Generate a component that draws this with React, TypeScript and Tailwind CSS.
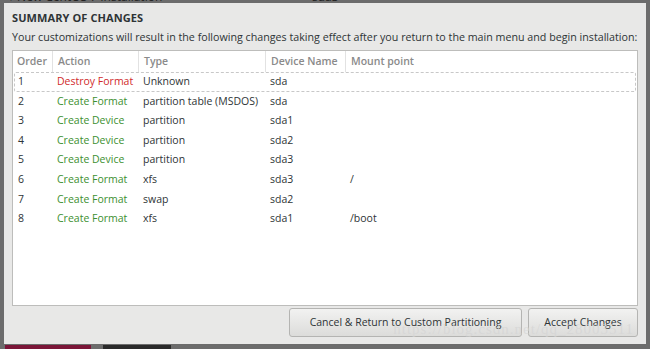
import React from "react";

type Row = { order: number; action: string; destroy?: boolean; type: string; device: string; mount: string };

const rows: Row[] = [
  { order: 1, action: "Destroy Format", destroy: true, type: "Unknown", device: "sda", mount: "" },
  { order: 2, action: "Create Format", type: "partition table (MSDOS)", device: "sda", mount: "" },
  { order: 3, action: "Create Device", type: "partition", device: "sda1", mount: "" },
  { order: 4, action: "Create Device", type: "partition", device: "sda2", mount: "" },
  { order: 5, action: "Create Device", type: "partition", device: "sda3", mount: "" },
  { order: 6, action: "Create Format", type: "xfs", device: "sda3", mount: "/" },
  { order: 7, action: "Create Format", type: "swap", device: "sda2", mount: "" },
  { order: 8, action: "Create Format", type: "xfs", device: "sda1", mount: "/boot" },
];

const cols = "grid grid-cols-[40px_86px_127px_80px_1fr]";

export default function App() {
  return (
    <div className="w-[650px] h-[349px] bg-[#6c6c6c] flex flex-col overflow-hidden font-['Open_Sans',sans-serif] text-[#2e3436]">
      {/* background window, mostly hidden */}
      <div className="h-[3px] overflow-hidden flex text-[12px] text-[#222] leading-[14px]">
        <div className="-mt-[10px] pl-[8px] w-[312px]">▾ New CentOS 7 Installation</div>
        <div className="-mt-[10px] w-[40px]">sda3</div>
      </div>

      {/* dialog */}
      <div className="mx-[4px] h-[341px] bg-[#e8e8e7] flex flex-col px-[8px]">
        <div className="mt-[7px] h-[15px] text-[11px] font-bold leading-[15px] tracking-[0.1px]">SUMMARY OF CHANGES</div>
        <div className="mt-[5px] h-[15px] text-[10.7px] leading-[15px] whitespace-nowrap">
          Your customizations will result in the following changes taking effect after you return to the main menu and begin installation:
        </div>

        {/* table */}
        <div className="mt-[5px] h-[256px] bg-white border border-[#bdbdbb] flex flex-col text-[10.5px]">
          <div className={`${cols} h-[21px] text-[#8a8a8a] font-semibold leading-[21px]`}>
            <div className="pl-[4px] border-r border-[#e2e2e2]">Order</div>
            <div className="pl-[5px] border-r border-[#e2e2e2]">Action</div>
            <div className="pl-[5px] border-r border-[#e2e2e2]">Type</div>
            <div className="pl-[5px] border-r border-[#e2e2e2]">Device Name</div>
            <div className="pl-[5px]">Mount point</div>
          </div>
          {rows.map((r, i) => (
            <div
              key={r.order}
              className={`${cols} h-[19.6px] leading-[17px] mx-[1px] ${i === 0 ? "border border-dashed border-[#c8c8c8] rounded-[2px]" : "border border-transparent"}`}
            >
              <div className="pl-[3px]">{r.order}</div>
              <div className={`pl-[2px] ${r.destroy ? "text-[#d12a2a]" : "text-[#3c8f2f]"}`}>{r.action}</div>
              <div className="pl-[2px]">{r.type}</div>
              <div className="pl-[2px]">{r.device}</div>
              <div className="pl-[2px]">{r.mount}</div>
            </div>
          ))}
        </div>

        {/* buttons */}
        <div className="relative mt-[2px] flex justify-end gap-[6px]">
          <button className="w-[233px] h-[29px] rounded-[3px] border border-[#b4b4b2] bg-gradient-to-b from-[#f2f2f1] to-[#dcdcda] text-[10.5px] text-[#2e3436]">
            Cancel &amp; Return to Custom Partitioning
          </button>
          <button className="w-[110px] h-[29px] rounded-[3px] border border-[#b4b4b2] bg-gradient-to-b from-[#f2f2f1] to-[#dcdcda] text-[10.5px] text-[#2e3436]">
            Accept Changes
          </button>
          <div className="absolute right-[4px] top-[10px] text-[15px] font-['Liberation_Serif',serif] text-[#d4d4d4]/70 tracking-[1px] pointer-events-none">
            https://blog.csdn.net/qq_28003511
          </div>
        </div>
      </div>

      {/* taskbar hints */}
      <div className="flex h-[4px] mt-[1px]">
        <div className="ml-[5px] w-[86px] bg-[#7a1538]" />
        <div className="ml-[12px] w-[68px] bg-[#2a2a2a]" />
      </div>
    </div>
  );
}
